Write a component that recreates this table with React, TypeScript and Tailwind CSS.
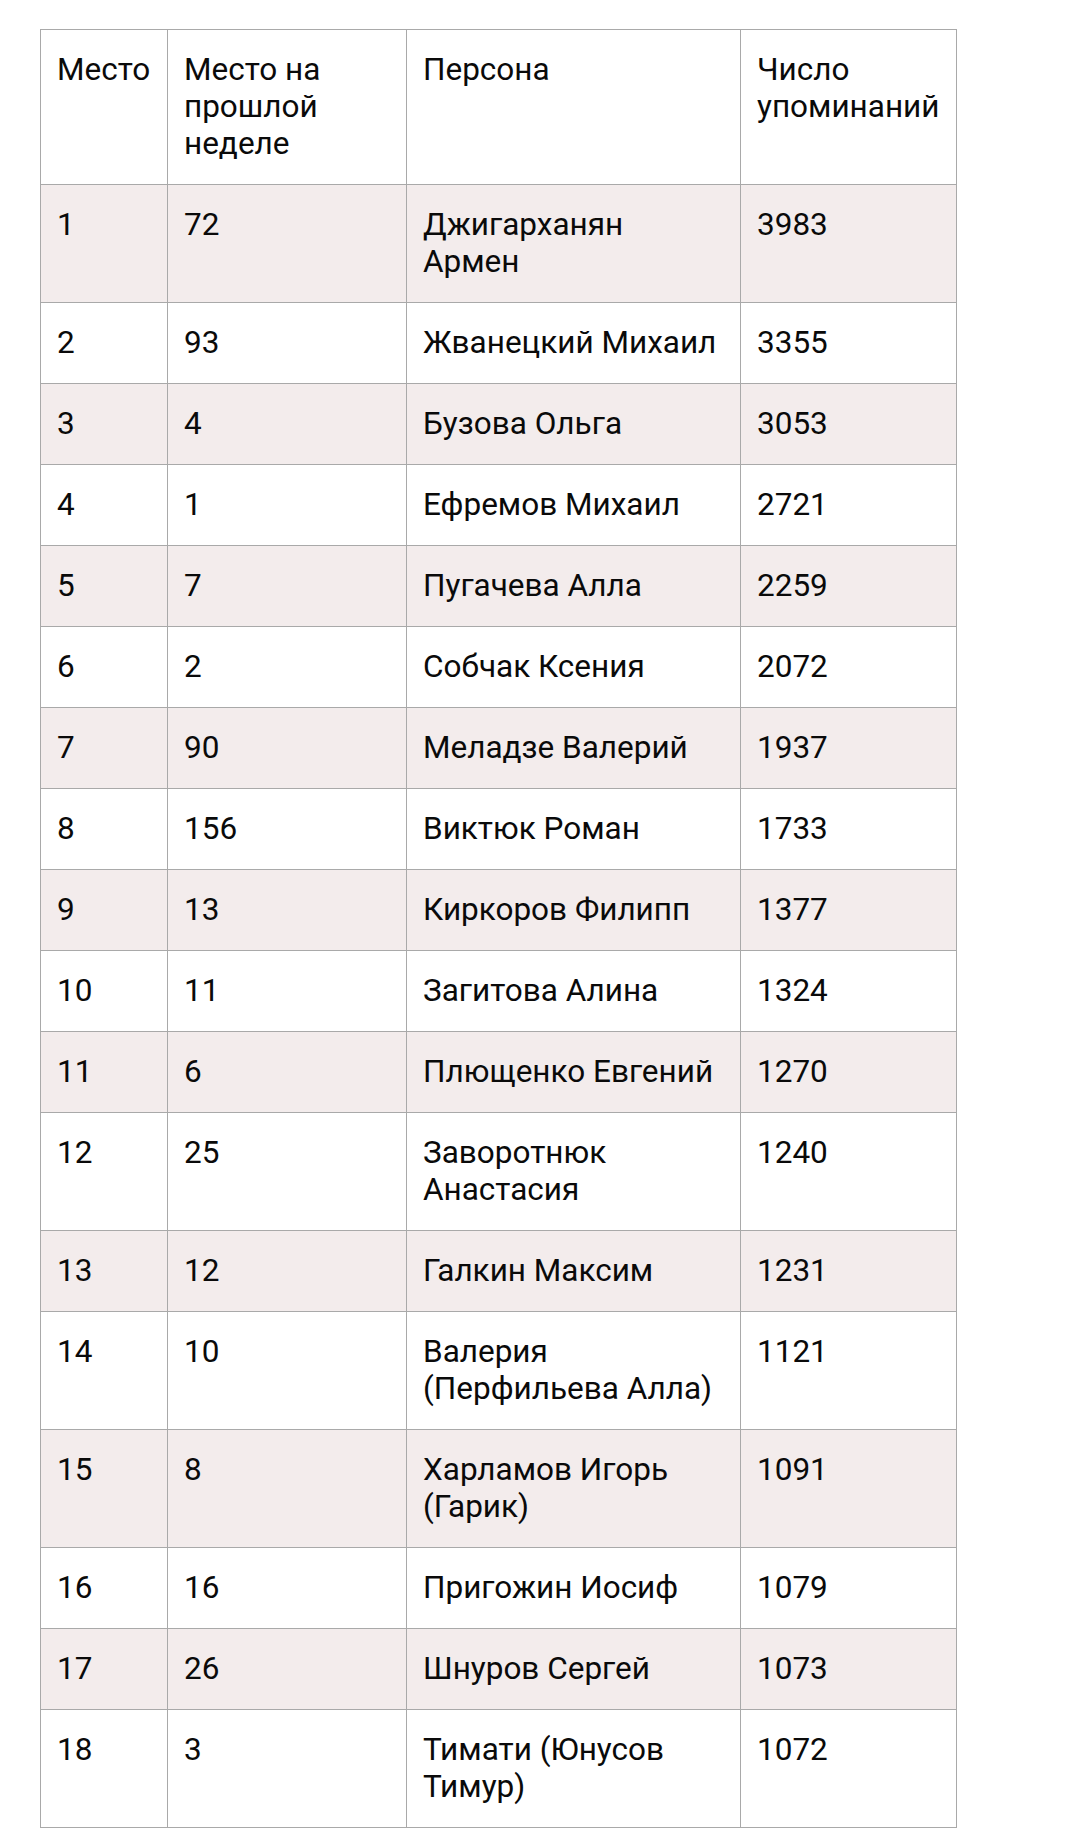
const rows: [number, number, string, number][] = [
  [1, 72, "Джигарханян Армен", 3983],
  [2, 93, "Жванецкий Михаил", 3355],
  [3, 4, "Бузова Ольга", 3053],
  [4, 1, "Ефремов Михаил", 2721],
  [5, 7, "Пугачева Алла", 2259],
  [6, 2, "Собчак Ксения", 2072],
  [7, 90, "Меладзе Валерий", 1937],
  [8, 156, "Виктюк Роман", 1733],
  [9, 13, "Киркоров Филипп", 1377],
  [10, 11, "Загитова Алина", 1324],
  [11, 6, "Плющенко Евгений", 1270],
  [12, 25, "Заворотнюк Анастасия", 1240],
  [13, 12, "Галкин Максим", 1231],
  [14, 10, "Валерия (Перфильева Алла)", 1121],
  [15, 8, "Харламов Игорь (Гарик)", 1091],
  [16, 16, "Пригожин Иосиф", 1079],
  [17, 26, "Шнуров Сергей", 1073],
  [18, 3, "Тимати (Юнусов Тимур)", 1072],
];

const cell = "border border-[#a9a9a9] pl-[16px] pr-[20px] pt-[21px] pb-[22px] align-top text-left font-normal";

export default function App() {
  return (
    <div className="min-h-screen bg-white pl-[40px] pt-[29px] font-['Roboto',_'Noto_Sans',sans-serif] text-[31.5px] leading-[37px] text-[#0a0a0a]">
      <table className="w-[916px] table-fixed border-collapse">
        <colgroup>
          <col className="w-[127px]" />
          <col className="w-[239px]" />
          <col className="w-[334px]" />
          <col className="w-[216px]" />
        </colgroup>
        <thead>
          <tr className="bg-white">
            <th className={cell}>Место</th>
            <th className={cell}>Место на прошлой неделе</th>
            <th className={cell}>Персона</th>
            <th className={cell}>Число упоминаний</th>
          </tr>
        </thead>
        <tbody>
          {rows.map(([place, prev, name, count]) => (
            <tr key={place} className={place % 2 === 1 ? "bg-[#f3ecec]" : "bg-white"}>
              <td className={cell}>{place}</td>
              <td className={cell}>{prev}</td>
              <td className={cell}>{name}</td>
              <td className={cell}>{count}</td>
            </tr>
          ))}
        </tbody>
      </table>
    </div>
  );
}
